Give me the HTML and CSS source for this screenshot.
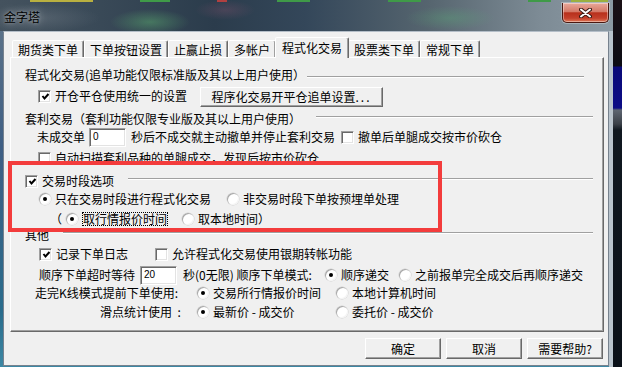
FILE: index.html
```html
<!DOCTYPE html>
<html lang="zh">
<head>
<meta charset="utf-8">
<title>金字塔</title>
<link rel="stylesheet" href="styles.css">
</head>
<body>
<div class="window">
  <div class="titlebar">
    <span class="title">金字塔</span>
    <div class="close">
      <svg width="13" height="10" viewBox="0 0 13 10">
        <path d="M2 1.5 L11 8.5 M11 1.5 L2 8.5" stroke="#3a1a14" stroke-width="4" stroke-linecap="round"/>
        <path d="M2 1.5 L11 8.5 M11 1.5 L2 8.5" stroke="#ffffff" stroke-width="2" stroke-linecap="round"/>
      </svg>
    </div>
  </div>
  <div class="client">
    <div class="tabs">
      <div class="tab">期货类下单</div>
      <div class="tab">下单按钮设置</div>
      <div class="tab">止赢止损</div>
      <div class="tab">多帐户</div>
      <div class="tab active">程式化交易</div>
      <div class="tab">股票类下单</div>
      <div class="tab">常规下单</div>
    </div>
    <div class="panel">
      <div class="row group g-prog">
        <span class="gtitle">程式化交易(追单功能仅限标准版及其以上用户使用）</span>
        <span class="gline gline-short"></span>
      </div>
      <div class="row r-unify">
        <label class="opt w-unify"><span class="cb on"><svg width="9" height="9" viewBox="0 0 9 9"><polyline points="1.5,4 3.5,6.5 7.5,2" fill="none" stroke="#000" stroke-width="2"/></svg></span>开仓平仓使用统一的设置</label>
        <button class="btn btn-chase">程序化交易开平仓追单设置<span class="dots">...</span></button>
      </div>
      <div class="row group g-arb">
        <span class="gtitle">套利交易（套利功能仅限专业版及其以上用户使用）</span>
        <span class="gline gline-arb"></span>
      </div>
      <div class="row r-unfilled">
        <span class="lbl w-unfilled">未成交单</span>
        <span class="field">0</span>
        <span class="lbl w-seconds">秒后不成交就主动撤单并停止套利交易</span>
        <label class="opt"><span class="cb"></span>撤单后单腿成交按市价砍仓</label>
      </div>
      <div class="row r-scan">
        <label class="opt"><span class="cb"></span>自动扫描套利品种的单腿成交，发现后按市价砍仓</label>
      </div>
      <div class="row group g-session">
        <label class="opt"><span class="cb on"><svg width="9" height="9" viewBox="0 0 9 9"><polyline points="1.5,4 3.5,6.5 7.5,2" fill="none" stroke="#000" stroke-width="2"/></svg></span>交易时段选项</label>
        <span class="gline gline-session"></span>
      </div>
      <div class="row r-session">
        <label class="opt w-only"><span class="rb on"></span>只在交易时段进行程式化交易</label>
        <label class="opt"><span class="rb"></span>非交易时段下单按预埋单处理</label>
      </div>
      <div class="row r-time">
        <span class="paren">（</span>
        <label class="opt w-quote"><span class="rb on"></span><span class="focus">取行情报价时间</span></label>
        <label class="opt"><span class="rb"></span>取本地时间）</label>
      </div>
      <div class="row group g-other">
        <span class="gtitle">其他</span>
        <span class="gline gline-other"></span>
      </div>
      <div class="row r-log">
        <label class="opt w-log"><span class="cb on"><svg width="9" height="9" viewBox="0 0 9 9"><polyline points="1.5,4 3.5,6.5 7.5,2" fill="none" stroke="#000" stroke-width="2"/></svg></span>记录下单日志</label>
        <label class="opt"><span class="cb"></span>允许程式化交易使用银期转帐功能</label>
      </div>
      <div class="row r-seq">
        <span class="lbl w-timeout">顺序下单超时等待</span>
        <span class="field">20</span>
        <span class="lbl w-mode">秒(0无限) 顺序下单模式:</span>
        <label class="opt w-seqopt"><span class="rb on"></span>顺序递交</label>
        <label class="opt"><span class="rb"></span>之前报单完全成交后再顺序递交</label>
      </div>
      <div class="row r-kline">
        <span class="lbl w-klabel">走完K线模式提前下单使用:</span>
        <label class="opt w-col"><span class="rb on"></span>交易所行情报价时间</label>
        <label class="opt"><span class="rb"></span>本地计算机时间</label>
      </div>
      <div class="row r-slip">
        <span class="lbl w-klabel slip-label">滑点统计使用 &nbsp;:</span>
        <label class="opt w-col"><span class="rb on"></span>最新价 - 成交价</label>
        <label class="opt"><span class="rb"></span>委托价 - 成交价</label>
      </div>
    </div>
    <div class="actions">
      <button class="btn btn-dlg">确定</button>
      <button class="btn btn-dlg">取消</button>
      <button class="btn btn-dlg">需要帮助?</button>
    </div>
  </div>
</div>
<div class="mark"></div>
</body>
</html>
```
FILE: styles.css
```css
* { box-sizing: border-box; }
html, body { margin: 0; padding: 0; }
body {
  width: 622px;
  height: 367px;
  overflow: hidden;
  position: relative;
  font-family: "Noto Sans CJK SC", "Noto Sans", sans-serif;
  font-size: 12px;
  line-height: 16px;
  color: #000;
  background: linear-gradient(180deg, #1a1016 0, #0c0c14 66px, #0a0a78 67px, #0c0c86 108px, #5e6672 110px, #3a4048 124px, #101820 130px, #0a1018 100%);
}

.window {
  width: 613px;
  height: 367px;
  display: flex;
  flex-direction: column;
  background:
    linear-gradient(90deg, transparent 0 609px, #b9c4cd 609px),
    linear-gradient(180deg, #61768a 0, #3f5f84 40%, #2a6c8c 85%, #3d88a4 100%);
}

.titlebar {
  height: 31px;
  flex: none;
  display: flex;
  justify-content: space-between;
  align-items: flex-start;
  padding: 3px 4px 0 4px;
  background:
    linear-gradient(90deg, transparent 30px, #b9b040 30px 93px, transparent 93px 140px, #3f9a48 140px 170px, transparent 170px 217px, #b04040 217px 227px, transparent 227px 277px, #3f9a48 277px 310px, transparent 310px 388px, #3f9a48 388px 421px, transparent 421px 528px, #3f9a48 528px 551px, transparent 551px 571px, #9ab040 571px 608px, transparent 608px) top left / 100% 2px no-repeat,
    radial-gradient(ellipse 40px 13px at 150px 22px, rgba(90,170,110,.5), transparent),
    radial-gradient(ellipse 45px 12px at 450px 18px, rgba(90,170,120,.35), transparent),
    radial-gradient(ellipse 30px 10px at 225px 10px, rgba(160,90,120,.25), transparent),
    radial-gradient(ellipse 60px 14px at 40px 18px, rgba(120,130,140,.35), transparent),
    linear-gradient(90deg, #44525e 0%, #3a4a58 15%, #2b3c4c 35%, #34475a 50%, #56656f 70%, #7d8b95 88%, #8c9aa4 100%);
}

.title {
  margin-top: 6px;
  line-height: 16px;
  color: #000;
  text-shadow: 0 0 8px rgba(255,255,255,.55), 0 0 3px rgba(255,255,255,.35);
}

.close {
  width: 47px;
  height: 20px;
  border: 1px solid #4a1810;
  border-top: none;
  border-radius: 0 0 5px 5px;
  background: linear-gradient(180deg, #e9a99b 0, #d47a68 45%, #b8301c 52%, #c4412c 80%, #e07a58 100%);
  box-shadow: inset 0 0 0 1px rgba(255,255,255,.4), 0 0 0 1px rgba(255,255,255,.3);
  display: flex;
  align-items: center;
  justify-content: center;
}
.close svg { display: block; }

.client {
  flex: none;
  margin-left: 3px;
  width: 606px;
  height: 335px;
  background: #f0f0f0;
  border: 1px solid #77828e;
  border-top-color: #b4bec8;
  padding: 5px 0 0 6px;
  display: flex;
  flex-direction: column;
}

.tabs {
  display: flex;
  align-items: flex-end;
  height: 20px;
  padding-left: 2px;
}
.tab {
  height: 17px;
  padding: 1px 5px 0;
  border: 1px solid;
  border-bottom: none;
  border-color: #fff #696969 transparent #fff;
  box-shadow: inset -1px 0 #a0a0a0;
  border-radius: 2px 2px 0 0;
  line-height: 15px;
  background: #f0f0f0;
  white-space: nowrap;
}
.tab.active {
  height: 21px;
  margin: 0 -1px -1px;
  padding: 2px 6px 0;
  position: relative;
  z-index: 1;
}

.panel {
  width: 594px;
  height: 275px;
  border: 1px solid;
  border-color: #fff #696969 #696969 #fff;
  box-shadow: inset -1px -1px #a0a0a0;
  padding-top: 9px;
  display: flex;
  flex-direction: column;
}

.row {
  display: flex;
  align-items: center;
  height: 16px;
  white-space: nowrap;
  flex: none;
}

.group { padding-left: 14px; padding-right: 10px; }
.gline {
  flex: 1;
  height: 2px;
  align-self: flex-start;
  margin-top: 5px;
  border-top: 1px solid #a0a0a0;
  border-bottom: 1px solid #fff;
}
.gline-short { margin-top: 9px; margin-left: 2px; margin-right: 9px; }
.gline-arb { margin-left: 15px; }
.gline-session { margin-left: 14px; }
.gline-other { margin-left: 14px; }

.opt {
  display: flex;
  align-items: center;
  gap: 4px;
}

.cb {
  width: 13px;
  height: 13px;
  flex: none;
  background: #fff;
  border: 1px solid;
  border-color: #a0a0a0 #fff #fff #a0a0a0;
  box-shadow: inset 1px 1px #696969, inset -1px -1px #e3e3e3;
  display: flex;
  align-items: center;
  justify-content: center;
}
.cb svg { display: block; margin: 1px 0 0 1px; }

.rb {
  width: 12px;
  height: 12px;
  flex: none;
  border-radius: 50%;
  background: #fff;
  box-shadow: inset 1px 1px #a8a8a8, inset -1px -1px #f4f4f4, 0 0 0 0.5px #d0d0d0;
  position: relative;
}
.rb.on::after {
  content: "";
  position: absolute;
  left: 4px;
  top: 4px;
  width: 4px;
  height: 4px;
  border-radius: 50%;
  background: #000;
}

.btn {
  font: inherit;
  color: #000;
  background: #f0f0f0;
  border: 1px solid;
  border-color: #fff #696969 #696969 #fff;
  box-shadow: inset -1px -1px #a0a0a0;
  padding: 0;
  line-height: 16px;
}
.btn-chase { width: 183px; height: 20px; margin-top: 1px; }
.dots { letter-spacing: 2px; }
.btn-dlg { width: 76px; height: 21px; }

.field {
  width: 37px;
  height: 19px;
  flex: none;
  background: #fff;
  border: 1px solid;
  border-color: #a0a0a0 #fff #fff #a0a0a0;
  box-shadow: inset 1px 1px #696969, inset -1px -1px #e3e3e3;
  font-family: "Liberation Sans", Arial, sans-serif;
  font-size: 10px;
  line-height: 12px;
  padding: 2px 0 0 3px;
}

.lbl { flex: none; }

/* row placement */
.r-unify { margin-top: 5px; padding-left: 27px; }
.w-unify { width: 162px; }
.g-arb { margin-top: 7px; }
.r-unfilled { margin-top: 2px; padding-left: 26px; }
.w-unfilled { width: 52px; }
.w-seconds { width: 210px; margin-left: 5px; }
.r-scan { margin-top: 5px; padding-left: 27px; }
.g-session { margin-top: 7px; }
.r-session { margin-top: 2px; padding-left: 28px; }
.w-only { width: 188px; }
.r-time { margin-top: 4px; padding-left: 39px; }
.paren { width: 16px; flex: none; }
.w-quote { width: 116px; }
.focus {
  display: inline-block;
  height: 14px;
  line-height: 12px;
  border: 1px dotted #000;
}
.g-other { margin-top: 0; }
.r-log { margin-top: 3px; padding-left: 28px; }
.w-log { width: 116px; }
.r-seq { margin-top: 5px; padding-left: 28px; }
.w-timeout { width: 101px; }
.w-mode { width: 142px; margin-left: 6px; }
.w-seqopt { width: 74px; }
.r-kline { margin-top: 2px; padding-left: 24px; }
.w-klabel { width: 162px; }
.w-col { width: 139px; }
.r-slip { margin-top: 3px; padding-left: 24px; }
.slip-label { padding-left: 65px; white-space: pre; }

.actions {
  display: flex;
  justify-content: flex-end;
  gap: 5px;
  width: 594px;
  margin-top: 6px;
  padding-right: 1px;
}

.mark {
  position: absolute;
  left: 8px;
  top: 161px;
  width: 434px;
  height: 71px;
  border: 4px solid #f33c3c;
  pointer-events: none;
}
```
